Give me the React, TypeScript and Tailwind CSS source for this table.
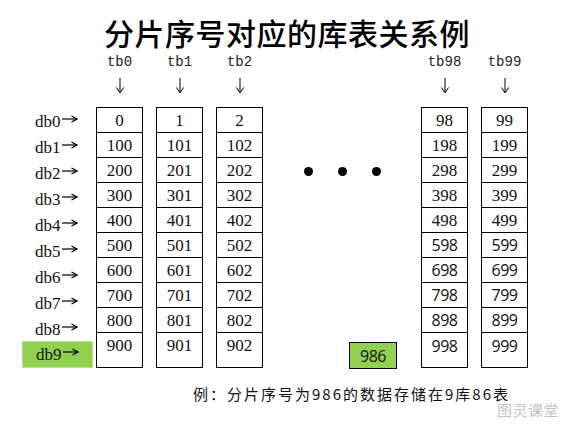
import React from "react";

const ROWS = Array.from({ length: 10 }, (_, i) => i);
const LEFT_TABLES = [0, 1, 2];
const RIGHT_TABLES = [98, 99];

const DownArrow = () => (
    <svg width="10" height="16" viewBox="0 0 10 16" className="block">
        <line x1="5" y1="0" x2="5" y2="14" stroke="#000" strokeWidth="1" />
        <path d="M1.5 9.5 L5 15 L8.5 9.5" fill="none" stroke="#000" strokeWidth="1" />
    </svg>
);

const RightArrow = () => (
    <svg width="16" height="10" viewBox="0 0 16 10" className="block -mt-[5px] ml-[1px]">
        <line x1="0" y1="5" x2="14" y2="5" stroke="#000" strokeWidth="1.2" />
        <path d="M9.5 2 L15 5 L9.5 8" fill="none" stroke="#000" strokeWidth="1.2" />
    </svg>
);

const TableColumn = ({ tb, sansFrom = 99 }: { tb: number; sansFrom?: number }) => (
    <div className="w-[47px] flex flex-col border border-black divide-y divide-black">
        {ROWS.map((r) => (
            <div
                key={r}
                className={`h-[25px] flex items-center justify-center leading-none text-[#111] ${
                    r >= sansFrom
                        ? "font-['Open_Sans',sans-serif] font-normal text-[16px] tracking-[-0.5px]"
                        : "font-['Liberation_Serif',serif] text-[17px]"
                }`}
            >
                {r * 100 + tb}
            </div>
        ))}
    </div>
);

const Header = ({ tb }: { tb: number }) => (
    <div className="w-[47px] flex flex-col items-center">
        <div className="h-[24px] pt-[3px] text-[14px] leading-[18px] font-['Liberation_Mono',monospace] text-[#222]">
            tb{tb}
        </div>
        <div className="h-[33px] pt-[4px]">
            <DownArrow />
        </div>
    </div>
);

export default function App() {
    return (
        <div className="w-[568px] h-[426px] bg-white relative overflow-hidden font-['Noto_Sans_CJK_SC',sans-serif]">
            {/* Title */}
            <div className="h-[50px] pt-[14px] pl-[6px] text-center">
                <h1 className="text-[30px] leading-[36px] font-medium tracking-[0.5px] text-black">
                    分片序号对应的库表关系例
                </h1>
            </div>

            {/* Table labels + arrows */}
            <div className="flex pl-[96px] gap-[13px]">
                {LEFT_TABLES.map((t) => (
                    <Header key={t} tb={t} />
                ))}
                <div className="w-[132px]" />
                {RIGHT_TABLES.map((t) => (
                    <Header key={t} tb={t} />
                ))}
            </div>

            {/* Grid body */}
            <div className="flex pl-[22px]">
                <div className="w-[71px] mr-[3px] pt-[1px] flex flex-col">
                    {ROWS.map((r) => (
                        <div
                            key={r}
                            className={`h-[26px] flex items-center pl-[13px] font-['Liberation_Serif',serif] text-[17px] leading-none text-[#111] ${
                                r === 9 ? "bg-[#92d050] border border-[#b9df95] -mt-[1px] h-[27px] pl-[12px]" : ""
                            }`}
                        >
                            <span>db{r}</span>
                            <RightArrow />
                        </div>
                    ))}
                </div>

                <div className="flex gap-[13px]">
                    {LEFT_TABLES.map((t) => (
                        <TableColumn key={t} tb={t} />
                    ))}

                    <div className="w-[132px] relative flex flex-col pt-[1px]">
                        <div className="h-[52px]" />
                        <div className="h-[26px] flex items-center pl-[28px] gap-[25px] -mt-[2px]">
                            <span className="w-[9px] h-[9px] rounded-full bg-black" />
                            <span className="w-[9px] h-[9px] rounded-full bg-black" />
                            <span className="w-[9px] h-[9px] rounded-full bg-black" />
                        </div>
                        <div className="flex-1" />
                        <div className="ml-[73px] w-[48px] h-[27px] -mb-[1px] bg-[#92d050] border border-black flex items-center justify-center text-[16px] font-['Open_Sans',sans-serif] font-normal tracking-[-0.5px] text-[#111]">
                            986
                        </div>
                    </div>

                    {RIGHT_TABLES.map((t) => (
                        <TableColumn key={t} tb={t} sansFrom={5} />
                    ))}
                </div>
            </div>

            {/* Caption */}
            <p className="mt-[16px] pl-[193px] text-[15px] leading-[20px] tracking-[2px] text-[#111]">
                例：分片序号为986的数据存储在9库86表
            </p>

            {/* Watermark */}
            <div className="absolute left-[497px] top-[400px] text-[15px] leading-[20px] tracking-[0.5px] text-[#c4c4c4] [text-shadow:0_0_1px_#fff]">
                图灵课堂
            </div>
        </div>
    );
}
